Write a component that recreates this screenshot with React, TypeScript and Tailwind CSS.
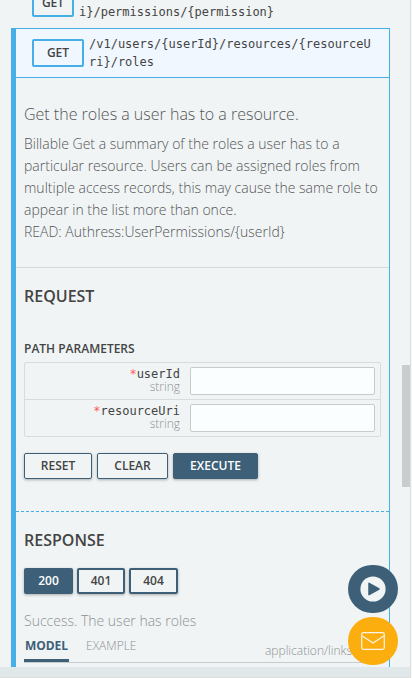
import type { ReactNode } from 'react';

const MONO = "font-['DejaVu_Sans_Mono',monospace]";

function Method({ className }: { className: string }) {
  return (
    <span
      className={`flex h-7 shrink-0 items-center justify-center rounded-[2px] border-2 border-[#47afe8] text-[12px] leading-4 font-semibold text-[#444] ${className}`}
    >
      GET
    </span>
  );
}

function Button({ children, className }: { children: ReactNode; className: string }) {
  return (
    <button
      className={`flex h-[26px] items-center justify-center rounded-[2px] border-[#3d6078] text-[12px] leading-4 font-semibold shadow-[0_1px_3px_rgba(0,0,0,0.3)] ${className}`}
    >
      {children}
    </button>
  );
}

function Param({ name, className }: { name: string; className: string }) {
  return (
    <div className={`flex border-[#d8dcdd] ${className}`}>
      <div className="w-[155px] pt-1 text-right">
        <div className={`h-[14px] text-[12px] leading-[14px] text-[#444] ${MONO}`}>
          <span className="text-[#ff5b5b]">*</span>
          {name}
        </div>
        <div className="text-[12px] leading-[12px] font-light text-[#8f9192]">string</div>
      </div>
      <input
        aria-label={name}
        className="mt-1 ml-[10px] h-7 w-[185px] rounded-[2px] border border-[#c7cbcc] bg-[#fafeff] px-2 text-[12px]"
      />
    </div>
  );
}

export default function App() {
  return (
    <div className="h-[678px] w-[412px] overflow-hidden bg-[#f6f7f7] font-['Open_Sans',sans-serif] text-[#444]">
      <div className="relative flex h-[678px] w-[411px] flex-col border-r border-b border-[#dddfdf] bg-[#f0f4f5]">
        <main className="h-[667px] overflow-hidden">
          <div className="flex h-7 pl-8">
            <Method className="-mt-[11px] w-[42px]" />
            <span className={`ml-[5px] pt-[3px] text-[12px] leading-[18px] ${MONO}`}>
              {'i}/permissions/{permission}'}
            </span>
          </div>

          <section className="ml-[11px] h-[660px] w-[379px] border-t border-r border-l-[5px] border-[#47afe8]">
            <header className="flex h-[49px] items-center border-b border-[#47afe8] bg-[#f0f7ff] pl-4">
              <Method className="w-[52px]" />
              <span className={`ml-[5px] w-[285px] text-[12px] leading-[18px] break-all ${MONO}`}>
                {'/v1/users/{userId}/resources/{resourceUri}/roles'}
              </span>
            </header>

            <div className="h-[190px] border-b border-[#d5d9da] px-2 pt-[25px] font-light text-[#555]">
              <h2 className="text-[16px] leading-[22px]">Get the roles a user has to a resource.</h2>
              <p className="mt-2 text-[14px] leading-[22px] whitespace-nowrap">
                Billable Get a summary of the roles a user has to a<br />
                particular resource. Users can be assigned roles from<br />
                multiple access records, this may cause the same role to<br />
                appear in the list more than once.<br />
                {'READ: Authress:UserPermissions/{userId}'}
              </p>
            </div>

            <div className="h-[244px] border-b border-dashed border-[#47afe8] px-2 pt-[17px]">
              <h3 className="text-[16px] leading-[22px] font-semibold">REQUEST</h3>
              <h4 className="mt-[34px] text-[12px] leading-4 font-semibold">PATH PARAMETERS</h4>
              <div className="mt-[5px] w-[357px] rounded-[2px] border border-[#d8dcdd]">
                <Param name="userId" className="h-[37px] border-b" />
                <Param name="resourceUri" className="h-[36px]" />
              </div>
              <div className="mt-4 flex">
                <Button className="w-[68px] border">RESET</Button>
                <Button className="ml-[5px] w-[71px] border">CLEAR</Button>
                <Button className="ml-[5px] w-[85px] border bg-[#3d6078] text-white">EXECUTE</Button>
              </div>
            </div>

            <div className="px-2 pt-[17px]">
              <h3 className="text-[16px] leading-[22px] font-semibold">RESPONSE</h3>
              <div className="mt-[17px] flex">
                <Button className="w-[49px] border-2 bg-[#3d6078] text-white">200</Button>
                <Button className="ml-1 w-12 border-2">401</Button>
                <Button className="ml-1 w-[49px] border-2">404</Button>
              </div>
              <p className="mt-4 text-[14px] leading-[22px] font-light text-[#8f9192]">
                Success. The user has roles
              </p>
              <div className="flex h-[31px] w-[357px] border-b border-[#c7cbcc] text-[12px]">
                <span className="flex h-[30px] w-[45px] justify-center border-b-[3px] border-[#3d6078] pt-[6px] leading-4 font-bold text-[#3d6078]">
                  MODEL
                </span>
                <span className="ml-[17px] pt-[6px] leading-4 font-light text-[#8f9192]">EXAMPLE</span>
                <span className="ml-auto pt-[11px] pr-[29px] leading-4 font-light text-[#8f9192]">
                  application/links
                </span>
              </div>
            </div>
          </section>
        </main>
        <footer className="h-[10px] bg-[#e0e8ea]" />

        <div className="absolute top-[565px] left-[348px] flex flex-col gap-1">
          <button aria-label="Play" className="flex h-12 w-[50px] items-center justify-center rounded-[24px] bg-[#3d6078]">
            <svg viewBox="0 0 26 26" className="h-[26px] w-[26px]">
              <circle cx="13" cy="13" r="12.6" fill="#f0f4f5" />
              <path d="M9 7.3 19 13 9 18.7Z" fill="#3d6078" stroke="#3d6078" strokeWidth="1.5" strokeLinejoin="round" />
            </svg>
          </button>
          <button aria-label="Mail" className="flex h-12 w-[50px] items-center justify-center rounded-[24px] bg-[#fbae0d]">
            <svg viewBox="0 0 26 20" className="h-5 w-[26px]" fill="none" stroke="#f7f3e8" strokeWidth="1.25">
              <rect x="1.7" y="1.7" width="22.6" height="16.6" rx="1.8" />
              <path d="m2.2 4.9 10.8 7 10.8-7" strokeLinejoin="round" />
            </svg>
          </button>
        </div>
        <div className="absolute top-[365px] right-0 h-[122px] w-2 bg-[#c9cdce]" />
      </div>
    </div>
  );
}
